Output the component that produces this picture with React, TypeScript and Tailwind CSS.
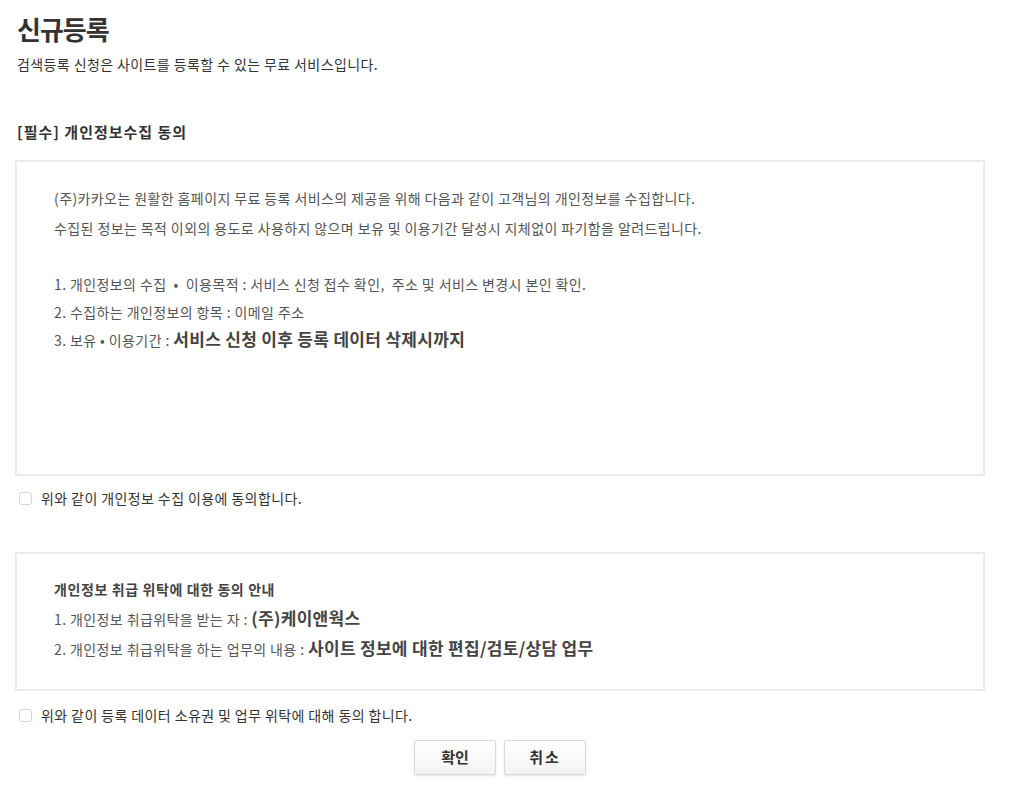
export default function App() {
  return (
    <div
      className="w-[1024px] h-[800px] bg-white text-[#333]"
      style={{ fontFamily: '"Noto Sans CJK KR", "Noto Sans", sans-serif' }}
    >
      <div className="pl-[15px] w-[985px]">
        <h1 className="pt-[10px] pl-[2px] text-[26px] leading-[38px] font-bold text-[#333] tracking-[-1px]">신규등록</h1>
        <p className="mt-[6px] pl-[2px] text-[14px] leading-[20px] tracking-[0.4px]">
          검색등록 신청은 사이트를 등록할 수 있는 무료 서비스입니다.
        </p>

        <h2 className="mt-[48px] pl-[2px] text-[15px] leading-[20px] font-bold tracking-[1px]">
          [필수] 개인정보수집 동의
        </h2>

        <div className="mt-[18px] h-[316px] border-2 border-[#ececec] pl-[37px] pt-[21px] text-[14px] text-[#555] tracking-[0.4px]">
          <p className="leading-[30px]">
            (주)카카오는 원활한 홈페이지 무료 등록 서비스의 제공을 위해 다음과 같이 고객님의 개인정보를 수집합니다.
          </p>
          <p className="leading-[30px]">
            수집된 정보는 목적 이외의 용도로 사용하지 않으며 보유 및 이용기간 달성시 지체없이 파기함을 알려드립니다.
          </p>
          <div className="mt-[27px]">
            <p className="leading-[28px]">
              1. 개인정보의 수집 &nbsp;•&nbsp; 이용목적 : 서비스 신청 접수 확인,&nbsp; 주소 및 서비스 변경시 본인 확인.
            </p>
            <p className="leading-[28px]">2. 수집하는 개인정보의 항목 : 이메일 주소</p>
            <p className="leading-[28px]">
              3. 보유 • 이용기간 :{' '}
              <span className="text-[17px] leading-[20px] font-bold text-[#444] tracking-[0.3px]">
                서비스 신청 이후 등록 데이터 삭제시까지
              </span>
            </p>
          </div>
        </div>

        <label className="mt-[12px] flex items-center gap-[9px] pl-[4px] text-[14px] tracking-[0.4px]">
          <span className="w-[13px] h-[13px] rounded-[3px] border border-[#d5d5d5] bg-white" />
          <span>위와 같이 개인정보 수집 이용에 동의합니다.</span>
        </label>

        <div className="mt-[43px] h-[139px] border-2 border-[#ececec] pl-[37px] pt-[20px] text-[14px] text-[#555] tracking-[0.4px]">
          <p className="leading-[30px] font-bold text-[#444] tracking-[0.6px]">개인정보 취급 위탁에 대한 동의 안내</p>
          <p className="leading-[30px]">
            1. 개인정보 취급위탁을 받는 자 :{' '}
            <span className="text-[17px] leading-[20px] font-bold text-[#444] tracking-[0.3px]">(주)케이앤웍스</span>
          </p>
          <p className="leading-[30px]">
            2. 개인정보 취급위탁을 하는 업무의 내용 :{' '}
            <span className="text-[17px] leading-[20px] font-bold text-[#444] tracking-[0.3px]">
              사이트 정보에 대한 편집/검토/상담 업무
            </span>
          </p>
        </div>

        <label className="mt-[14px] flex items-center gap-[9px] pl-[4px] text-[14px] tracking-[0.4px]">
          <span className="w-[13px] h-[13px] rounded-[3px] border border-[#d5d5d5] bg-white" />
          <span>위와 같이 등록 데이터 소유권 및 업무 위탁에 대해 동의 합니다.</span>
        </label>

        <div className="mt-[14px] flex justify-center gap-[8px]">
          <button className="w-[82px] h-[35px] rounded-[2px] border border-[#d9d9d9] bg-gradient-to-b from-white to-[#f3f3f3] shadow-[0_1px_2px_rgba(0,0,0,0.12)] text-[15px] font-bold text-[#333]">
            확인
          </button>
          <button className="w-[82px] h-[35px] rounded-[2px] border border-[#d9d9d9] bg-gradient-to-b from-white to-[#f3f3f3] shadow-[0_1px_2px_rgba(0,0,0,0.12)] text-[15px] font-bold text-[#333] tracking-[2px]">
            취소
          </button>
        </div>
      </div>
    </div>
  );
}
